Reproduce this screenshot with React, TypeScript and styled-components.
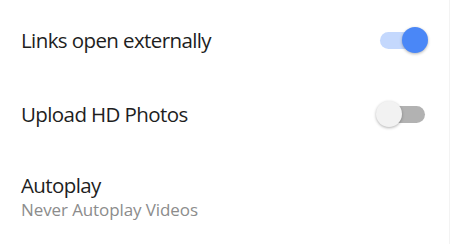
import React, { useState } from "react";
import styled, { createGlobalStyle } from "styled-components";

const GlobalStyle = createGlobalStyle`
  html, body {
    margin: 0;
    padding: 0;
    background: #ffffff;
  }
  body {
    font-family: "Open Sans", "Noto Sans", sans-serif;
  }
`;

const Page = styled.div`
  width: 450px;
  height: 244px;
  display: flex;
  flex-direction: column;
  padding-top: 14px;
  box-sizing: border-box;
  background: #fff;
  border-right: 1px solid #f3f3f3;
`;

const Row = styled.div<{ $multi?: boolean }>`
  display: flex;
  align-items: center;
  justify-content: space-between;
  padding: ${(p) => (p.$multi ? "8px" : "0")} 24px 0 21px;
  height: 52px;
  margin-bottom: 22px;
`;

const TextCol = styled.div`
  display: flex;
  flex-direction: column;
`;

const Title = styled.span`
  font-size: 20.5px;
  letter-spacing: -0.6px;
  color: #1e1e1e;
  line-height: 26px;
`;

const Subtitle = styled.span`
  font-size: 17px;
  letter-spacing: -0.1px;
  color: #8c8c8c;
  line-height: 23px;
`;

const Track = styled.button<{ $on: boolean }>`
  position: relative;
  width: 45px;
  height: 17px;
  border: none;
  padding: 0;
  border-radius: 9px;
  background: ${(p) => (p.$on ? "#c4d8fd" : "#b2b2b2")};
  cursor: pointer;
`;

const Thumb = styled.span<{ $on: boolean }>`
  position: absolute;
  top: 50%;
  left: ${(p) => (p.$on ? "22px" : "-4px")};
  width: 26px;
  height: 26px;
  margin-top: -13px;
  border-radius: 50%;
  background: ${(p) => (p.$on ? "#4a87f7" : "#f2f2f2")};
  box-shadow: 0 1px 3px rgba(0, 0, 0, 0.3);
`;

function Switch({ on, onToggle }: { on: boolean; onToggle: () => void }) {
  return (
    <Track $on={on} onClick={onToggle}>
      <Thumb $on={on} />
    </Track>
  );
}

export default function App() {
  const [links, setLinks] = useState(true);
  const [hd, setHd] = useState(false);

  return (
    <>
      <GlobalStyle />
      <Page>
        <Row>
          <Title>Links open externally</Title>
          <Switch on={links} onToggle={() => setLinks(!links)} />
        </Row>
        <Row>
          <Title>Upload HD Photos</Title>
          <Switch on={hd} onToggle={() => setHd(!hd)} />
        </Row>
        <Row $multi>
          <TextCol>
            <Title>Autoplay</Title>
            <Subtitle>Never Autoplay Videos</Subtitle>
          </TextCol>
        </Row>
      </Page>
    </>
  );
}
